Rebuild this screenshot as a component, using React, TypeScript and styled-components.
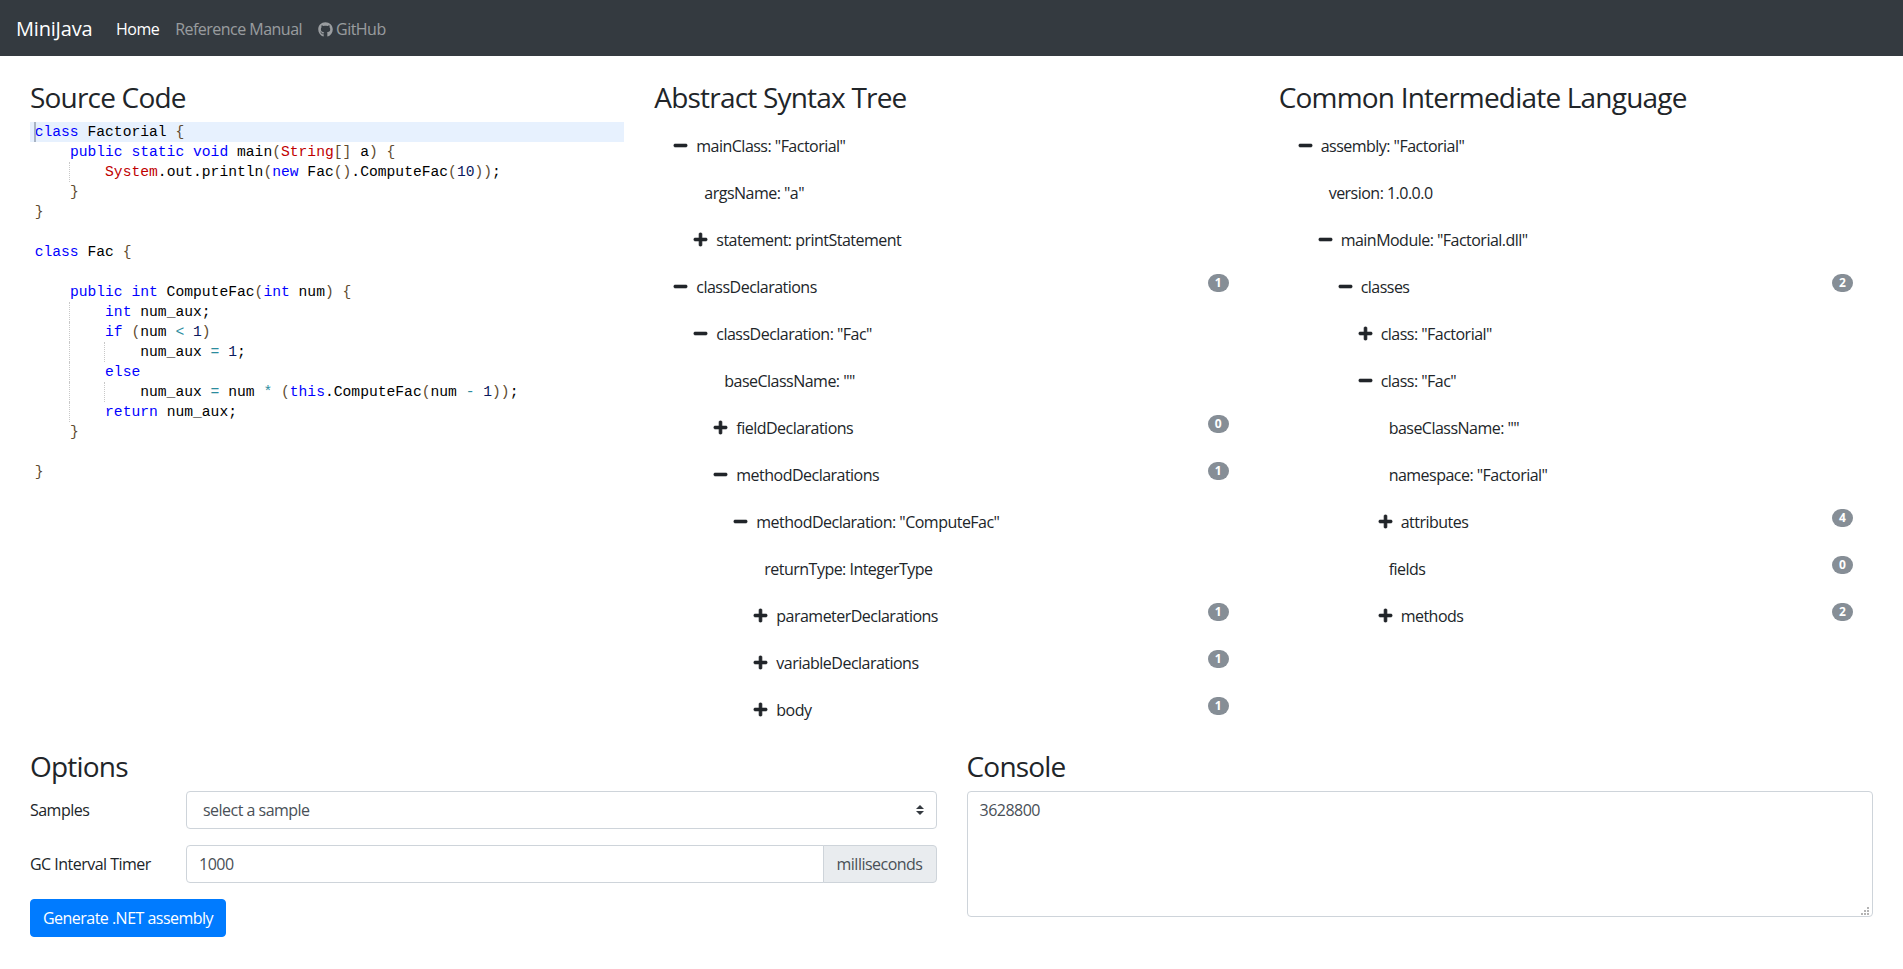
import React from 'react';
import styled, { createGlobalStyle } from 'styled-components';
import { FaGithub, FaMinus, FaPlus } from 'react-icons/fa';

const GlobalStyle = createGlobalStyle`
  body {
    margin: 0;
    background: #fff;
    color: #212529;
    font-family: 'Open Sans', 'Noto Sans', sans-serif;
    font-size: 16px;
    line-height: 24px;
    letter-spacing: -0.52px;
  }
`;

type TreeNode = { text: string; level: number; state?: 'open' | 'closed'; badge?: number };

const astNodes: TreeNode[] = [
  { text: 'mainClass: "Factorial"', level: 1, state: 'open' },
  { text: 'argsName: "a"', level: 2 },
  { text: 'statement: printStatement', level: 2, state: 'closed' },
  { text: 'classDeclarations', level: 1, state: 'open', badge: 1 },
  { text: 'classDeclaration: "Fac"', level: 2, state: 'open' },
  { text: 'baseClassName: ""', level: 3 },
  { text: 'fieldDeclarations', level: 3, state: 'closed', badge: 0 },
  { text: 'methodDeclarations', level: 3, state: 'open', badge: 1 },
  { text: 'methodDeclaration: "ComputeFac"', level: 4, state: 'open' },
  { text: 'returnType: IntegerType', level: 5 },
  { text: 'parameterDeclarations', level: 5, state: 'closed', badge: 1 },
  { text: 'variableDeclarations', level: 5, state: 'closed', badge: 1 },
  { text: 'body', level: 5, state: 'closed', badge: 1 },
];

const cilNodes: TreeNode[] = [
  { text: 'assembly: "Factorial"', level: 1, state: 'open' },
  { text: 'version: 1.0.0.0', level: 2 },
  { text: 'mainModule: "Factorial.dll"', level: 2, state: 'open' },
  { text: 'classes', level: 3, state: 'open', badge: 2 },
  { text: 'class: "Factorial"', level: 4, state: 'closed' },
  { text: 'class: "Fac"', level: 4, state: 'open' },
  { text: 'baseClassName: ""', level: 5 },
  { text: 'namespace: "Factorial"', level: 5 },
  { text: 'attributes', level: 5, state: 'closed', badge: 4 },
  { text: 'fields', level: 5, badge: 0 },
  { text: 'methods', level: 5, state: 'closed', badge: 2 },
];

type Tok = [string, string];
const k = (s: string): Tok => ['kw', s];
const t = (s: string): Tok => ['id', s];
const ty = (s: string): Tok => ['type', s];
const b = (s: string): Tok => ['brace', s];
const op = (s: string): Tok => ['op', s];
const n = (s: string): Tok => ['num', s];

const codeLines: { toks: Tok[]; guides?: number[]; active?: boolean }[] = [
  { toks: [k('class'), t(' Factorial '), b('{')], active: true },
  { toks: [t('    '), k('public static void'), t(' main'), b('('), ty('String'), b('[]'), t(' a'), b(')'), t(' '), b('{')] },
  { toks: [t('        '), ty('System'), t('.out.println'), b('('), k('new'), t(' Fac'), b('()'), t('.ComputeFac'), b('('), n('10'), b('))'), t(';')], guides: [1] },
  { toks: [t('    '), b('}')] },
  { toks: [b('}')] },
  { toks: [] },
  { toks: [k('class'), t(' Fac '), b('{')] },
  { toks: [] },
  { toks: [t('    '), k('public int'), t(' ComputeFac'), b('('), k('int'), t(' num'), b(')'), t(' '), b('{')] },
  { toks: [t('        '), k('int'), t(' num_aux;')], guides: [1] },
  { toks: [t('        '), k('if'), t(' '), b('('), t('num '), op('<'), t(' '), n('1'), b(')')], guides: [1] },
  { toks: [t('            num_aux '), op('='), t(' '), n('1'), t(';')], guides: [1, 2] },
  { toks: [t('        '), k('else')], guides: [1] },
  { toks: [t('            num_aux '), op('='), t(' num '), op('*'), t(' '), b('('), k('this'), t('.ComputeFac'), b('('), t('num '), op('-'), t(' '), n('1'), b('))'), t(';')], guides: [1, 2] },
  { toks: [t('        '), k('return'), t(' num_aux;')], guides: [1] },
  { toks: [t('    '), b('}')] },
  { toks: [] },
  { toks: [b('}')] },
];

const App = () => {
  return (
    <>
      <GlobalStyle />
      <Navbar>
        <Brand>MiniJava</Brand>
        <NavLink $active>Home</NavLink>
        <NavLink>Reference Manual</NavLink>
        <NavLink>
          <FaGithub size={15} />
          GitHub
        </NavLink>
      </Navbar>
      <Main>
        <TopRow>
          <section>
            <Heading>Source Code</Heading>
            <Editor>
              {codeLines.map((line, i) => (
                <CodeLine key={i} $active={line.active}>
                  {line.active && <Cursor />}
                  {line.guides?.map((g) => <IndentGuide key={g} $depth={g} />)}
                  {line.toks.map(([kind, text], j) => (
                    <Token key={j} $kind={kind}>{text}</Token>
                  ))}
                </CodeLine>
              ))}
            </Editor>
          </section>
          <section>
            <Heading>Abstract Syntax Tree</Heading>
            <Tree nodes={astNodes} />
          </section>
          <section>
            <Heading>Common Intermediate Language</Heading>
            <Tree nodes={cilNodes} />
          </section>
        </TopRow>
        <BottomRow>
          <section>
            <Heading>Options</Heading>
            <FormRow>
              <FieldLabel>Samples</FieldLabel>
              <SelectWrap>
                <Select defaultValue="">
                  <option value="">select a sample</option>
                </Select>
                <SelectArrows viewBox="0 0 8 10" width="8" height="10">
                  <path d="M4 0 L8 4 H0 Z M0 6 H8 L4 10 Z" fill="#343a40" />
                </SelectArrows>
              </SelectWrap>
            </FormRow>
            <FormRow>
              <FieldLabel>GC Interval Timer</FieldLabel>
              <InputGroup>
                <NumberInput defaultValue="1000" />
                <Addon>milliseconds</Addon>
              </InputGroup>
            </FormRow>
            <PrimaryButton>Generate .NET assembly</PrimaryButton>
          </section>
          <section>
            <Heading>Console</Heading>
            <ConsoleWrap>
              <ConsoleArea defaultValue="3628800" />
              <ResizeGrip viewBox="0 0 8 8" width="8" height="8">
                <path d="M6 0h2v2H6z M6 3h2v2H6z M3 3h2v2H3z M6 6h2v2H6z M3 6h2v2H3z M0 6h2v2H0z" fill="#b4b4b4" />
              </ResizeGrip>
            </ConsoleWrap>
          </section>
        </BottomRow>
      </Main>
    </>
  );
};

const Tree = ({ nodes }: { nodes: TreeNode[] }) => (
  <TreeList>
    {nodes.map((node, i) => (
      <TreeRow key={i} $level={node.level} $leaf={!node.state}>
        {node.state && (
          <ToggleIcon>
            {node.state === 'open' ? <FaMinus size={15} /> : <FaPlus size={15} />}
          </ToggleIcon>
        )}
        <span>{node.text}</span>
        {node.badge !== undefined && <Badge>{node.badge}</Badge>}
      </TreeRow>
    ))}
  </TreeList>
);

const Navbar = styled.nav`
  display: flex;
  align-items: center;
  height: 56px;
  box-sizing: border-box;
  padding: 2px 16px 0;
  background: #343a40;
`;

const Brand = styled.a`
  color: #fff;
  font-size: 20px;
  line-height: 30px;
  margin-right: 16px;
  width: 76px;
  white-space: nowrap;
  letter-spacing: -0.2px;
`;

const NavLink = styled.a<{ $active?: boolean }>`
  display: inline-flex;
  align-items: center;
  gap: 3px;
  padding: 0 8px;
  color: ${(p) => (p.$active ? '#fff' : 'rgba(255, 255, 255, 0.5)')};
`;

const Main = styled.main`
  padding: 25px 30px 0;
`;

const TopRow = styled.div`
  display: grid;
  grid-template-columns: repeat(3, 1fr);
  gap: 30px;
  height: 669px;
`;

const BottomRow = styled.div`
  display: grid;
  grid-template-columns: 1fr 1fr;
  gap: 30px;
`;

const Heading = styled.h3`
  margin: 0 0 7px;
  font-size: 28px;
  font-weight: 400;
  line-height: 33.6px;
  letter-spacing: -0.8px;
  white-space: nowrap;
`;

const Editor = styled.div`
  font-family: 'Liberation Mono', monospace;
  font-size: 14.66px;
  line-height: 20px;
  letter-spacing: 0;
  color: #000;
`;

const CodeLine = styled.div<{ $active?: boolean }>`
  position: relative;
  height: 20px;
  padding-left: 4.7px;
  white-space: pre;
  background: ${(p) => (p.$active ? '#e7f1fe' : 'transparent')};
`;

const Cursor = styled.span`
  position: absolute;
  top: 0;
  bottom: 0;
  left: 3.7px;
  width: 2px;
  background: #a9b4c4;
`;

const IndentGuide = styled.span<{ $depth: number }>`
  position: absolute;
  top: 0;
  bottom: 0;
  left: ${(p) => 3.5 + p.$depth * 35.1}px;
  border-left: 1px dotted #c8c8c8;
`;

const tokenColors: Record<string, string> = {
  kw: '#0000ff',
  id: '#000000',
  type: '#c00000',
  brace: '#5e4b30',
  op: '#2b8c9e',
  num: '#0b1a5e',
};

const Token = styled.span<{ $kind: string }>`
  color: ${(p) => tokenColors[p.$kind]};
`;

const TreeList = styled.ul`
  list-style: none;
  margin: 0;
  padding: 0.5px 0 0;
`;

const TreeRow = styled.li<{ $level: number; $leaf: boolean }>`
  display: flex;
  align-items: center;
  height: 47px;
  padding-left: ${(p) => p.$level * 20 + (p.$leaf ? 10 : 0)}px;
  padding-right: 20px;
  white-space: nowrap;
`;

const ToggleIcon = styled.span`
  display: inline-flex;
  flex: none;
  width: 15px;
  margin-left: -1px;
  margin-right: 8px;
  color: #212529;

  svg {
    stroke: currentColor;
    stroke-width: 24;
  }
`;

const Badge = styled.span`
  margin-left: auto;
  margin-top: -6.5px;
  min-width: 21px;
  height: 18px;
  padding: 0 7px;
  box-sizing: border-box;
  border-radius: 10px;
  background: #868e96;
  color: #fff;
  font-size: 12px;
  font-weight: 700;
  line-height: 18px;
  text-align: center;
  letter-spacing: 0;
`;

const FormRow = styled.div`
  display: flex;
  align-items: center;
  margin-bottom: 16px;
`;

const FieldLabel = styled.label`
  flex: none;
  width: 156px;
`;

const SelectWrap = styled.div`
  position: relative;
  flex: 1;
`;

const Select = styled.select`
  display: block;
  width: 100%;
  height: 38px;
  padding: 0 30px 0 16px;
  appearance: none;
  background: #fff;
  border: 1px solid #ced4da;
  border-radius: 4px;
  color: #495057;
  font: inherit;
  letter-spacing: inherit;
`;

const SelectArrows = styled.svg`
  position: absolute;
  top: 14px;
  right: 13px;
  pointer-events: none;
`;

const InputGroup = styled.div`
  display: flex;
  flex: 1;
`;

const NumberInput = styled.input`
  flex: 1;
  min-width: 0;
  height: 38px;
  box-sizing: border-box;
  padding: 0 12px;
  border: 1px solid #ced4da;
  border-radius: 4px 0 0 4px;
  color: #495057;
  font: inherit;
  letter-spacing: inherit;
`;

const Addon = styled.span`
  display: flex;
  align-items: center;
  height: 38px;
  box-sizing: border-box;
  width: 114px;
  justify-content: center;
  margin-left: -1px;
  background: #e9ecef;
  border: 1px solid #ced4da;
  border-radius: 0 4px 4px 0;
  color: #495057;
`;

const PrimaryButton = styled.button`
  display: block;
  height: 38px;
  width: 196px;
  padding: 0;
  background: #007bff;
  border: 1px solid #007bff;
  border-radius: 4px;
  color: #fff;
  font: inherit;
  letter-spacing: inherit;
`;

const ConsoleWrap = styled.div`
  position: relative;
`;

const ConsoleArea = styled.textarea`
  display: block;
  width: 100%;
  height: 126px;
  box-sizing: border-box;
  padding: 6px 12px;
  border: 1px solid #ced4da;
  border-radius: 4px;
  color: #495057;
  font: inherit;
  letter-spacing: inherit;
  resize: none;
`;

const ResizeGrip = styled.svg`
  position: absolute;
  right: 4px;
  bottom: 2px;
  pointer-events: none;
`;

export default App;
